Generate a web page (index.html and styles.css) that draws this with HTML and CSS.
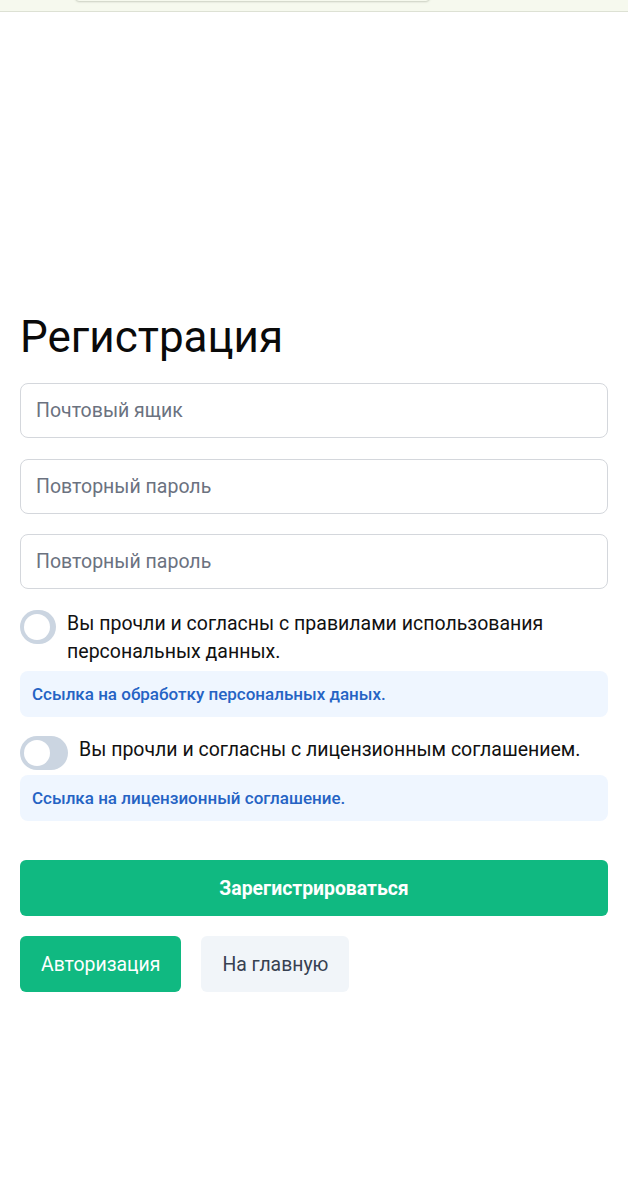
FILE: index.html
```html
<!DOCTYPE html>
<html lang="ru">
<head>
<meta charset="utf-8">
<title>Регистрация</title>
<link rel="stylesheet" href="styles.css">
</head>
<body>
<div class="topbar"><div class="topbar-pill"></div></div>
<main class="page">
  <h1 class="title">Регистрация</h1>
  <form class="form">
    <input class="field" type="email" placeholder="Почтовый ящик">
    <input class="field" type="password" placeholder="Повторный пароль">
    <input class="field" type="password" placeholder="Повторный пароль">

    <div class="consent">
      <label class="toggle-row">
        <span class="toggle"><span class="knob"></span></span>
        <span class="toggle-text">Вы прочли и согласны с правилами использования персональных данных.</span>
      </label>
      <a class="link-box" href="#">Ссылка на обработку персональных даных.</a>
    </div>

    <div class="consent">
      <label class="toggle-row">
        <span class="toggle"><span class="knob"></span></span>
        <span class="toggle-text">Вы прочли и согласны с лицензионным соглашением.</span>
      </label>
      <a class="link-box" href="#">Ссылка на лицензионный соглашение.</a>
    </div>

    <button class="btn btn-primary btn-block" type="button">Зарегистрироваться</button>
    <div class="btn-row">
      <button class="btn btn-primary btn-regular" type="button">Авторизация</button>
      <button class="btn btn-light" type="button">На главную</button>
    </div>
  </form>
</main>
</body>
</html>
```

FILE: styles.css
```css
* { box-sizing: border-box; }
html, body { margin: 0; padding: 0; background: #ffffff; }
body { font-family: Roboto, "Liberation Sans", Arial, sans-serif; color: #111111; }

.topbar {
  position: relative;
  height: 12px;
  background: #f6f9ee;
  border-bottom: 1px solid #dde1d4;
}
.topbar-pill {
  position: absolute;
  left: 75px;
  width: 355px;
  top: -8px;
  height: 9px;
  border-radius: 6px;
  background: #f6f9ee;
  box-shadow: 0 1px 2px rgba(120, 130, 110, 0.35);
}

.page { padding: 295px 20px 40px; }

.title {
  margin: 0 0 16px;
  font-size: 44px;
  font-weight: 400;
  line-height: 60px;
  color: #0a0a0a;
}

.form { display: flex; flex-direction: column; }

.field {
  height: 55px;
  width: 100%;
  border: 1px solid #d4d7dc;
  border-radius: 8px;
  padding: 0 15px;
  font-family: Roboto, "Liberation Sans", Arial, sans-serif;
  font-size: 19.5px;
  color: #111;
  background: #fff;
  margin-bottom: 20.5px;
  outline: none;
}
.field::placeholder { color: #6b7280; }

.consent { display: flex; flex-direction: column; gap: 5px; margin-bottom: 19px; }

.toggle-row { display: flex; align-items: flex-start; gap: 11px; cursor: pointer; }
.toggle {
  display: flex;
  align-items: center;
  width: 48px;
  height: 34px;
  flex-shrink: 1.35;
  min-width: 0;
  padding: 0 4px;
  background: #cbd5e1;
  border-radius: 17px;
}
.knob {
  width: 26px;
  height: 26px;
  flex-shrink: 0;
  border-radius: 50%;
  background: #ffffff;
}
.toggle-text {
  font-size: 19.5px;
  line-height: 28px;
  color: #111111;
}

.link-box {
  display: flex;
  align-items: center;
  height: 46px;
  padding: 0 12px;
  background: #eff6ff;
  border-radius: 8px;
  color: #2563c4;
  font-size: 17px;
  font-weight: 500;
  text-decoration: none;
}

.btn {
  height: 56px;
  border: none;
  border-radius: 6px;
  font-family: Roboto, "Liberation Sans", Arial, sans-serif;
  font-size: 19.4px;
  cursor: pointer;
}
.btn-primary { background: #10b981; color: #ffffff; }
.btn-block { width: 100%; font-weight: 700; margin-top: 20.5px; }
.btn-row { display: flex; gap: 20px; margin-top: 20px; }
.btn-regular { padding: 0 21px; font-weight: 400; }
.btn-light { background: #f1f5f9; color: #374151; padding: 0 21px; }
```
